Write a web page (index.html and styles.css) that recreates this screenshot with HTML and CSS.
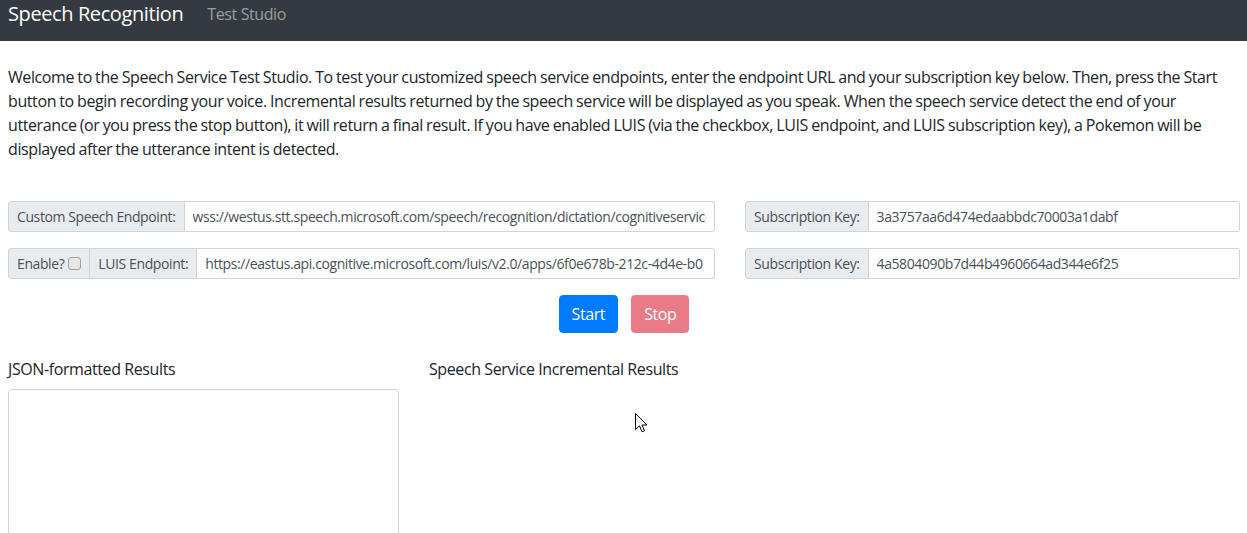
FILE: index.html
```html
<!DOCTYPE html>
<html lang="en">
<head>
<meta charset="utf-8">
<title>Speech Recognition</title>
<link rel="stylesheet" href="styles.css">
</head>
<body>
<nav class="navbar">
  <span class="brand">Speech Recognition</span>
  <span class="nav-link">Test Studio</span>
</nav>
<main class="page">
  <p class="intro">Welcome to the Speech Service Test Studio. To test your customized speech service endpoints, enter the endpoint URL and your subscription key below. Then, press the Start button to begin recording your voice. Incremental results returned by the speech service will be displayed as you speak. When the speech service detect the end of your utterance (or you press the stop button), it will return a final result. If you have enabled LUIS (via the checkbox, LUIS endpoint, and LUIS subscription key), a Pokemon will be displayed after the utterance intent is detected.</p>

  <div class="form-grid">
    <div class="input-group">
      <span class="addon">Custom Speech Endpoint:</span>
      <input class="field" type="text" value="wss://westus.stt.speech.microsoft.com/speech/recognition/dictation/cognitiveservices/v1?cid=">
    </div>
    <div class="input-group">
      <span class="addon">Subscription Key:</span>
      <input class="field" type="text" value="3a3757aa6d474edaabbdc70003a1dabf">
    </div>
    <div class="input-group">
      <span class="addon">Enable? <span class="check"></span></span>
      <span class="addon">LUIS Endpoint:</span>
      <input class="field" type="text" value="https://eastus.api.cognitive.microsoft.com/luis/v2.0/apps/6f0e678b-212c-4d4e-b0">
    </div>
    <div class="input-group">
      <span class="addon">Subscription Key:</span>
      <input class="field" type="text" value="4a5804090b7d44b4960664ad344e6f25">
    </div>
  </div>

  <div class="actions">
    <button class="btn btn-start" type="button">Start</button>
    <button class="btn btn-stop" type="button" disabled>Stop</button>
  </div>

  <div class="results">
    <div class="result-col">
      <label class="result-label">JSON-formatted Results</label>
      <textarea class="result-box"></textarea>
    </div>
    <div class="result-col">
      <label class="result-label">Speech Service Incremental Results</label>
    </div>
  </div>
</main>
<svg class="cursor" width="13" height="20" viewBox="0 0 13 20" aria-hidden="true">
  <path d="M0.5 0.5 L0.5 16.5 L4.5 12.8 L7 18.8 L9.5 17.8 L7 12 L12 12 Z" fill="#fff" stroke="#000" stroke-width="1" stroke-linejoin="miter"/>
</svg>
</body>
</html>
```
FILE: styles.css
```css
html, body {
  margin: 0;
  padding: 0;
  overflow: hidden;
}
body {
  font-family: "Open Sans", "Noto Sans", sans-serif;
  font-size: 16px;
  line-height: 24px;
  letter-spacing: -0.025em;
  color: #212529;
  background: #fff;
}
.navbar {
  height: 41px;
  background: #343a40;
  display: flex;
  align-items: flex-start;
  padding: 0 8px;
  box-sizing: border-box;
}
.brand {
  color: #fff;
  font-size: 20px;
  line-height: 28px;
  margin-right: 24px;
}
.nav-link {
  color: rgba(255, 255, 255, 0.5);
  font-size: 16px;
  line-height: 24px;
  padding-top: 2px;
}
.page {
  padding: 24px 7px 0 8px;
}
.intro {
  margin: 0 0 40px;
  word-spacing: -0.5px;
}
.form-grid {
  display: grid;
  grid-template-columns: 707px 1fr;
  column-gap: 30px;
  row-gap: 16px;
}
.input-group {
  display: flex;
  height: 31px;
  font-size: 14px;
  line-height: 21px;
}
.addon {
  display: flex;
  align-items: center;
  gap: 4px;
  padding: 0 8px;
  background: #e9ecef;
  color: #495057;
  border: 1px solid #ced4da;
  white-space: nowrap;
}
.addon + .addon {
  border-left: 1px solid #ced4da;
}
.input-group > :first-child {
  border-radius: 3px 0 0 3px;
}
.addon + .addon {
  border-left: none;
}
.field {
  flex: 1;
  min-width: 0;
  font: inherit;
  letter-spacing: inherit;
  color: #495057;
  padding: 0 8px;
  border: 1px solid #ced4da;
  border-left: none;
  border-radius: 0 3px 3px 0;
  background: #fff;
  outline: none;
}
.check {
  display: inline-block;
  width: 11px;
  height: 11px;
  border: 1px solid #a0a0a0;
  border-radius: 3px;
  background: #e6e6e6;
}
.actions {
  display: flex;
  justify-content: center;
  gap: 13px;
  margin-top: 16px;
}
.btn {
  font: inherit;
  font-size: 16px;
  line-height: 24px;
  letter-spacing: inherit;
  height: 38px;
  padding: 6px 12px;
  border-radius: 4px;
  border: 1px solid transparent;
  color: #fff;
}
.btn-start {
  background: #007bff;
  border-color: #007bff;
}
.btn-stop {
  background: #dc3545;
  border-color: #dc3545;
  opacity: 0.65;
}
.results {
  display: grid;
  grid-template-columns: 391px 1fr;
  column-gap: 30px;
  margin-top: 24px;
}
.result-col {
  display: flex;
  flex-direction: column;
}
.result-label {
  margin-bottom: 8px;
}
.result-box {
  height: 200px;
  border: 1px solid #ced4da;
  border-radius: 4px;
  resize: none;
  padding: 6px 12px;
}
.cursor {
  position: absolute;
  left: 635px;
  top: 413px;
}
```
